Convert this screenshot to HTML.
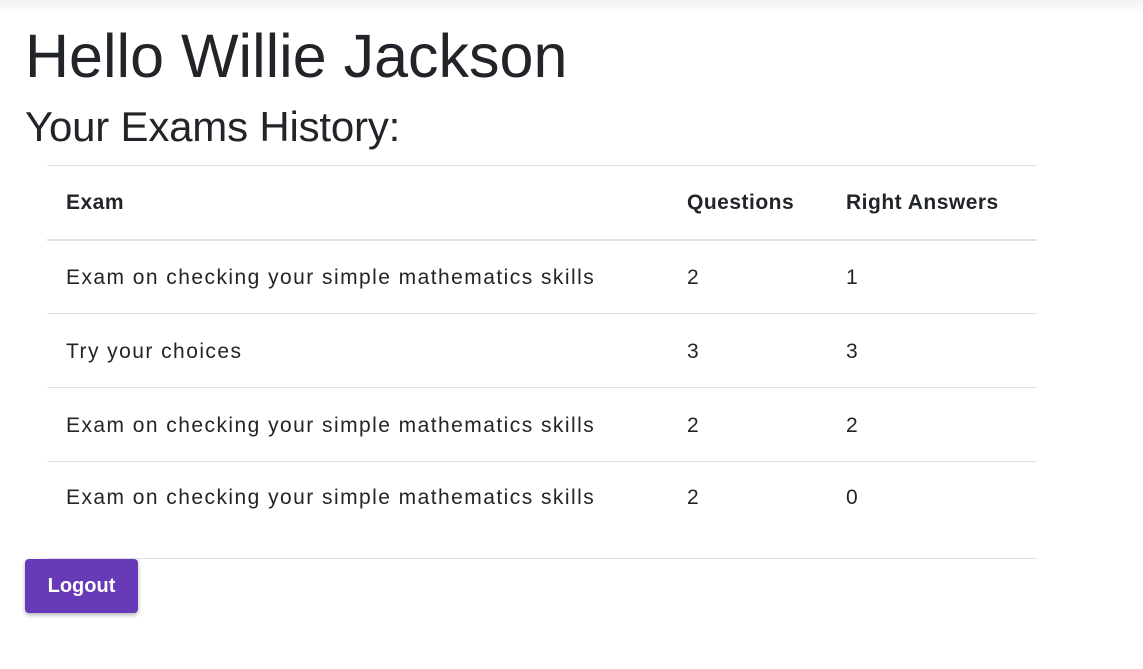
<!DOCTYPE html>
<html><head><meta charset="utf-8"><style>
body{margin:0;background:#fff;font-family:"Liberation Sans",Arial,sans-serif;color:#212529;width:1143px;height:669px;overflow:hidden;position:relative}
.top{position:absolute;left:0;top:0;width:1143px;height:14px;background:linear-gradient(#f2f2f2,#fff)}
h1{position:absolute;left:25px;top:16px;margin:0;font-size:61px;font-weight:400;line-height:80px;letter-spacing:0px}
h2{position:absolute;left:25px;top:102px;margin:0;font-size:42px;font-weight:400;line-height:50px;letter-spacing:-0.2px}
table{position:absolute;left:47px;top:165px;width:990px;border-collapse:collapse;font-size:21px;letter-spacing:1.45px}
td,th{text-align:left;padding:3px 0 0 19px;border-top:1px solid #dee2e6;height:74px;box-sizing:border-box}
th{font-weight:bold;height:74px;border-bottom:2px solid #dee2e6;letter-spacing:0.5px;padding-top:2px}
tr.last td{height:97px;border-bottom:1px solid #dee2e6;vertical-align:top;padding-top:24px}
.btn{position:absolute;left:25px;top:559px;width:113px;height:54px;background:#673ab7;border-radius:4px;color:#fff;font-weight:bold;font-size:20px;line-height:54px;text-align:center;box-shadow:0 2px 4px rgba(0,0,0,.3)}
</style></head><body>
<div class="top"></div>
<h1>Hello Willie Jackson</h1>
<h2>Your Exams History:</h2>
<table>
<tr><th style="width:621px">Exam</th><th style="width:159px">Questions</th><th>Right Answers</th></tr>
<tr><td>Exam on checking your simple mathematics skills</td><td>2</td><td>1</td></tr>
<tr><td>Try your choices</td><td>3</td><td>3</td></tr>
<tr><td>Exam on checking your simple mathematics skills</td><td>2</td><td>2</td></tr>
<tr class="last"><td>Exam on checking your simple mathematics skills</td><td>2</td><td>0</td></tr>
</table>
<div class="btn">Logout</div>
</body></html>
